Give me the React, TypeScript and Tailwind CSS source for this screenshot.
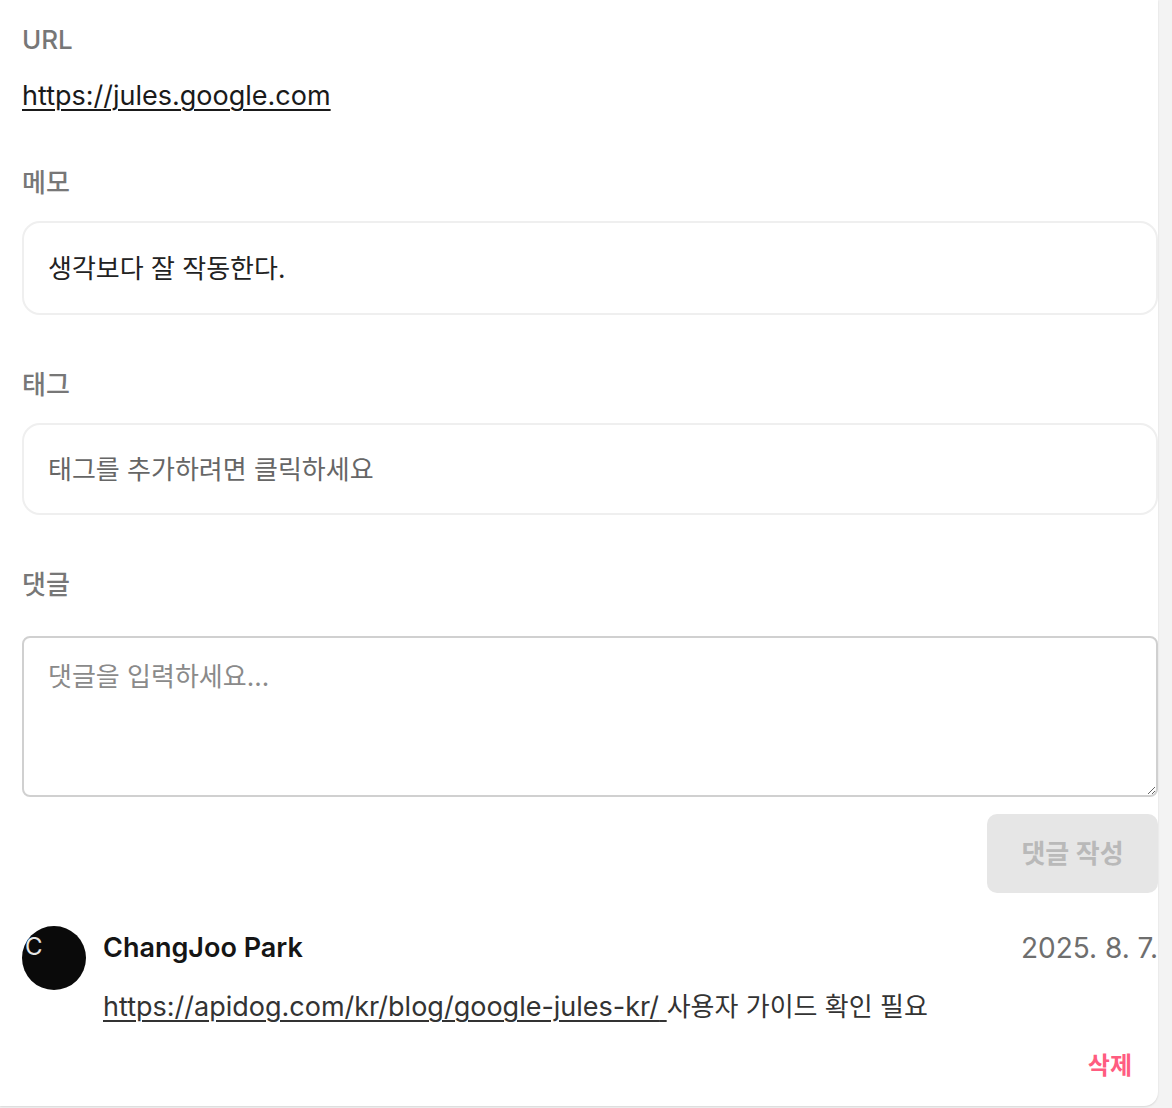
import { useState } from 'react';

const font = { fontFamily: '"Inter", "Noto Sans CJK KR", sans-serif' };

function Label({ children, className = '' }: { children: React.ReactNode; className?: string }) {
  return (
    <div className={`h-10 text-[26px] leading-10 font-medium text-[#777] ${className}`}>{children}</div>
  );
}

export default function App() {
  const [comment, setComment] = useState('');

  return (
    <div style={font} className="h-[1108px] w-[1172px] overflow-hidden bg-[#f3f3f3]">
      <div className="flex h-[1106px] w-[1158px] flex-col rounded-br-[14px] bg-white pl-[22px] pt-5 shadow-[0_1px_2px_rgba(0,0,0,0.12)]">
        <Label>URL</Label>
        <a
          href="https://jules.google.com"
          className="mt-4 h-10 self-start text-[27px] leading-10 text-[#1a1a1a] underline decoration-[1.5px] underline-offset-[4px]"
        >
          https://jules.google.com
        </a>

        <Label className="mt-[47px]">메모</Label>
        <div className="mt-[18px] flex h-[94px] items-center rounded-[18px] border-2 border-[#efefef] pl-6 text-[26px] text-[#222]">
          생각보다 잘 작동한다.
        </div>

        <Label className="mt-[50px]">태그</Label>
        <div className="mt-[18px] flex h-[92px] cursor-pointer items-center rounded-[18px] border-2 border-[#efefef] pl-6 text-[26px] text-[#666]">
          태그를 추가하려면 클릭하세요
        </div>

        <Label className="mt-[50px]">댓글</Label>
        <textarea
          value={comment}
          onChange={(e) => setComment(e.target.value)}
          placeholder="댓글을 입력하세요..."
          className="mt-[31px] h-[161px] w-full rounded-[8px] border-2 border-[#d0d0d0] px-6 pt-[21px] text-[26px] leading-9 text-[#222] outline-none placeholder:text-[#8a8a8a]"
        />
        <div className="mt-[17px] flex justify-end">
          <button
            disabled
            className="h-[79px] w-[171px] rounded-[10px] bg-[#e6e6e6] text-[26px] font-semibold text-[#b9b9b9]"
          >
            댓글 작성
          </button>
        </div>

        {/* comment */}
        <div className="mt-[33px] flex gap-[17px]">
          <div className="flex h-16 w-16 shrink-0 items-start rounded-full bg-[#0a0a0a] pl-[3px] pt-[9px] text-[24px] leading-6 text-[#e6e6e6]">
            C
          </div>
          <div className="flex min-w-0 flex-1 flex-col">
            <div className="flex h-11 items-center justify-between">
              <span className="text-[27px] font-semibold text-[#151515]">ChangJoo Park</span>
              <span className="text-[28px] text-[#6e6e6e]">2025. 8. 7.</span>
            </div>
            <p className="mt-[17px] h-10 text-[26px] leading-10 text-[#333]">
              <a
                href="https://apidog.com/kr/blog/google-jules-kr/"
                className="text-[27px] underline decoration-[1.5px] underline-offset-[4px]"
              >
                https://apidog.com/kr/blog/google-jules-kr/{' '}
              </a>
              사용자 가이드 확인 필요
            </p>
            <div className="mt-[19px] flex justify-end pr-[26px]">
              <button className="text-[24px] font-semibold leading-10 text-[#ff5c80]">삭제</button>
            </div>
          </div>
        </div>
      </div>
    </div>
  );
}
